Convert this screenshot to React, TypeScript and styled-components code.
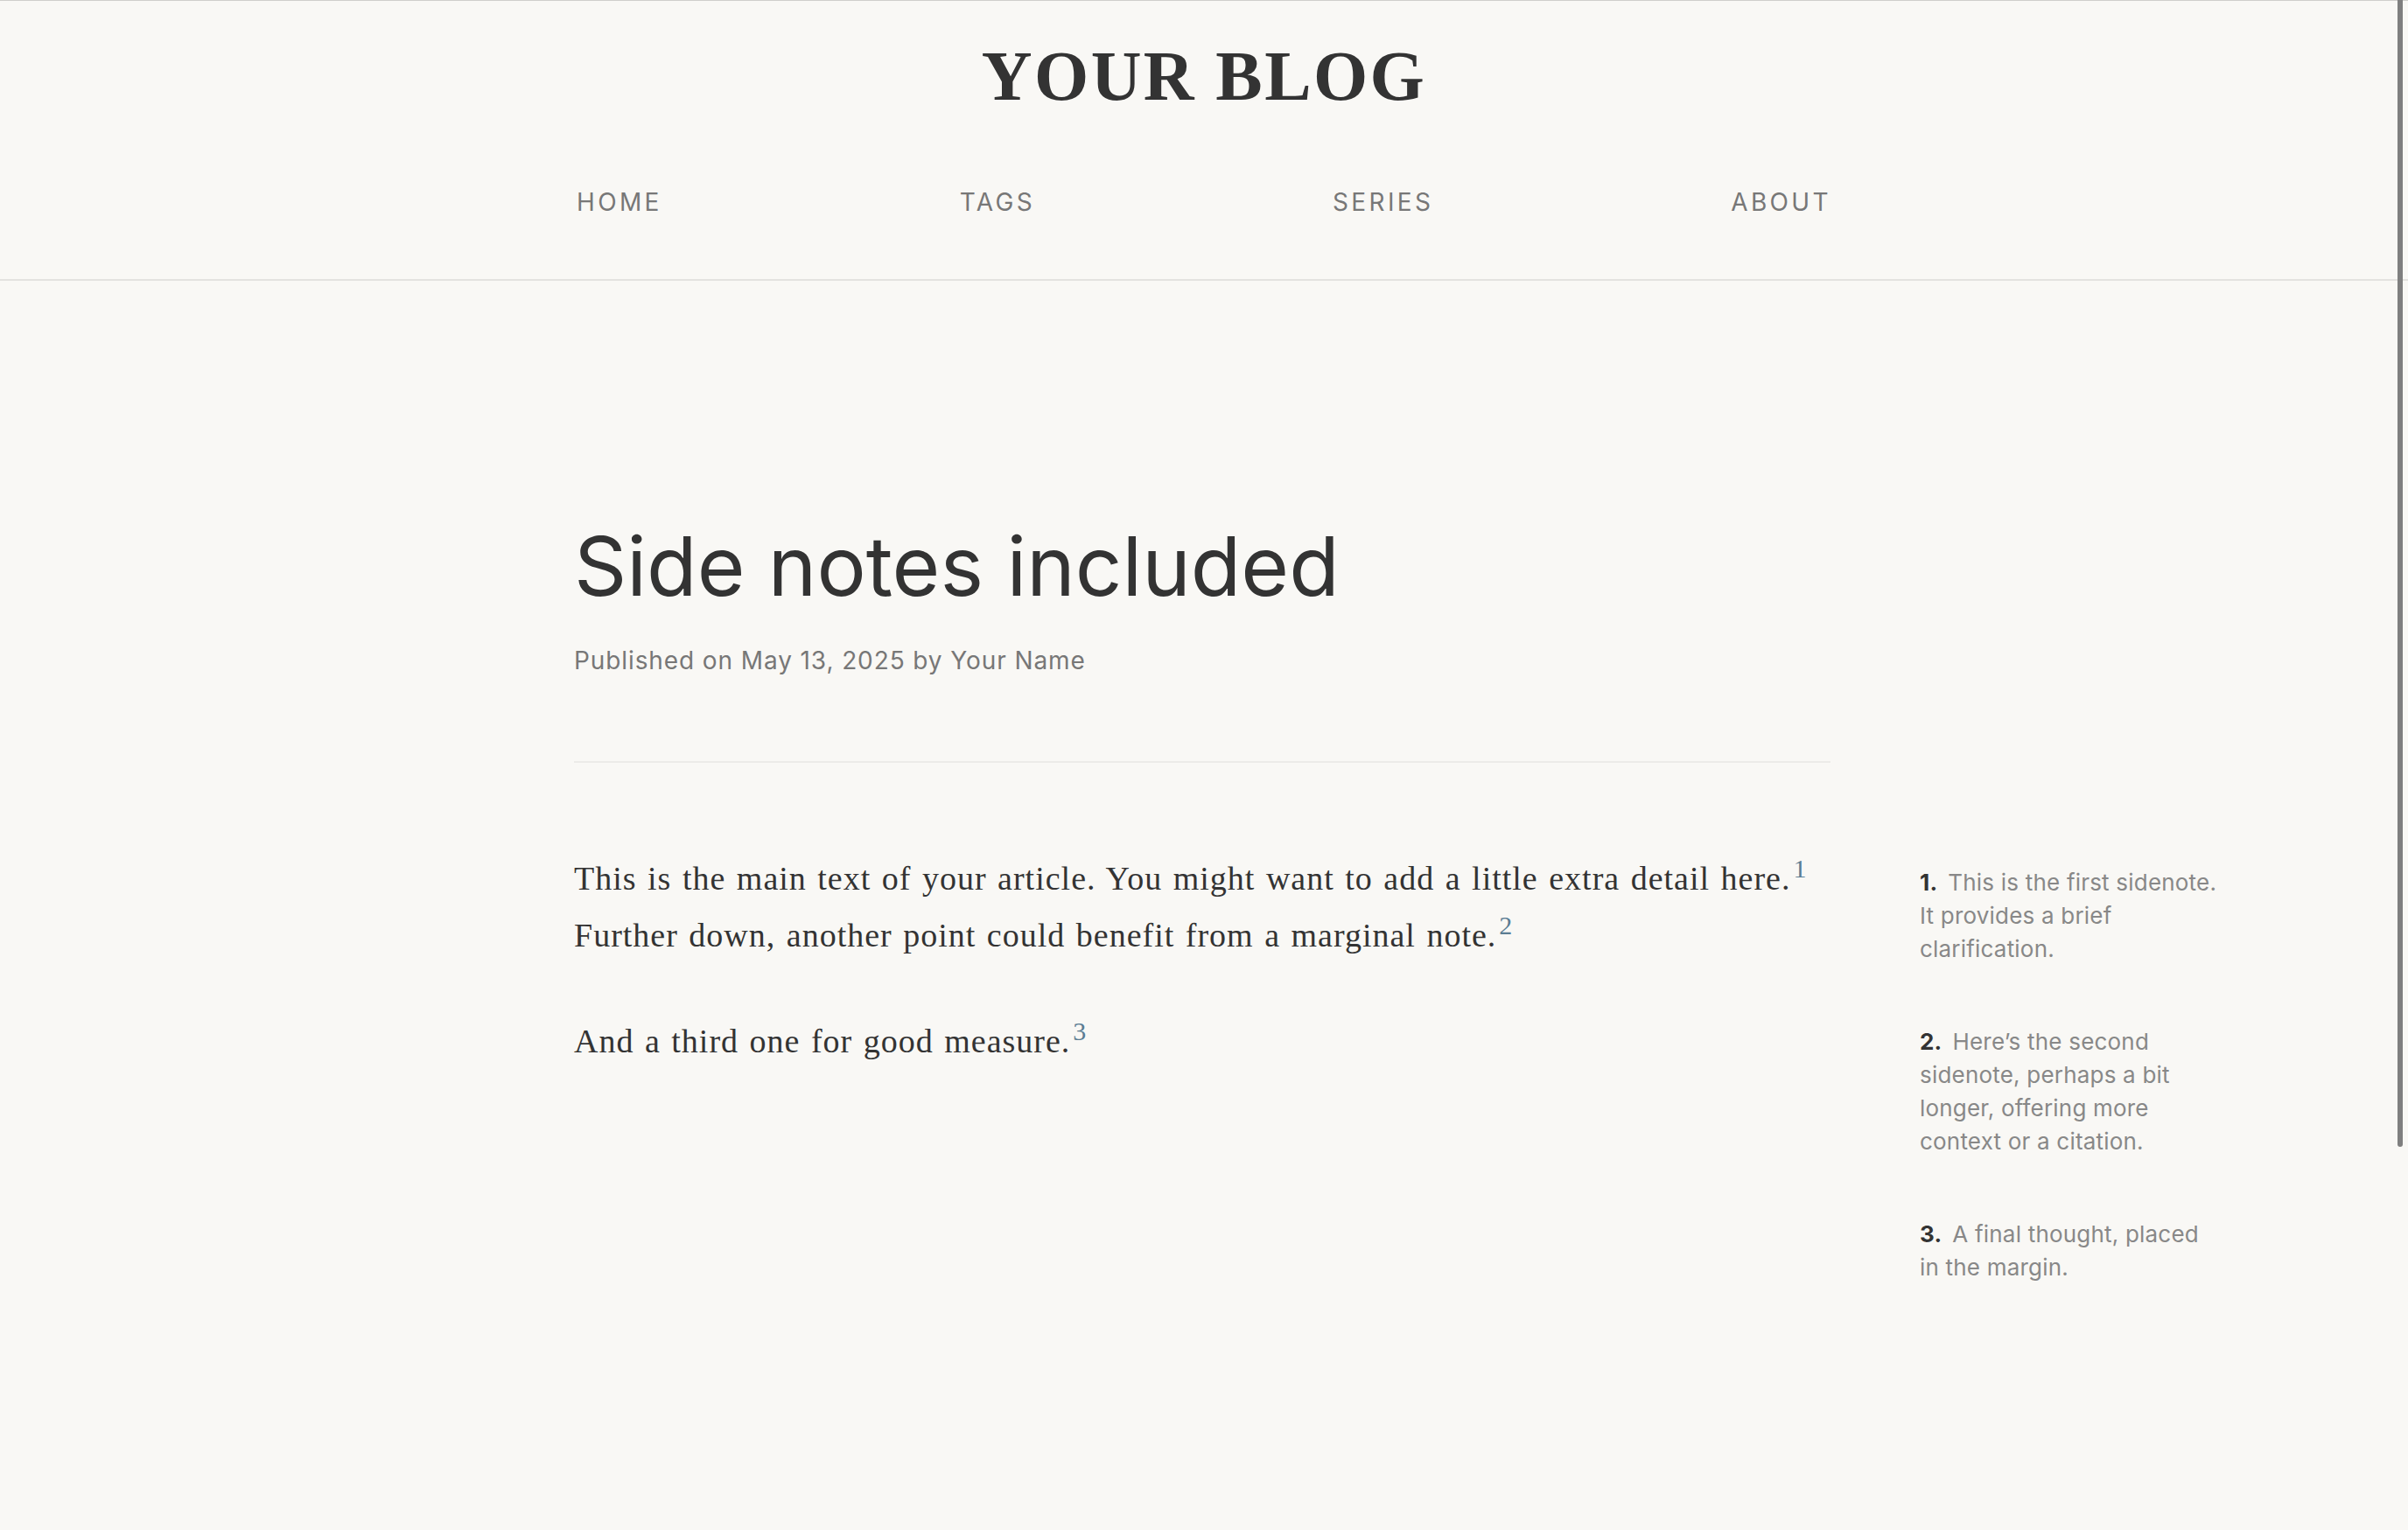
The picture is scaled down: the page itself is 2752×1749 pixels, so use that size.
import React from "react";
import styled, { createGlobalStyle } from "styled-components";

const sans = `Inter, "Noto Sans", "Liberation Sans", sans-serif`;
const serif = `"Liberation Serif", "DejaVu Serif", serif`;

const notes = [
  { id: 1, text: "This is the first sidenote. It provides a brief clarification." },
  { id: 2, text: "Here\u2019s the second sidenote, perhaps a bit longer, offering more context or a citation." },
  { id: 3, text: "A final thought, placed in the margin." }
];

const App: React.FC = () => {
  return (
    <Page>
      <GlobalStyle />
      <Header>
        <SiteTitle>YOUR BLOG</SiteTitle>
        <Nav>
          <NavLink href="#">HOME</NavLink>
          <NavLink href="#">TAGS</NavLink>
          <NavLink href="#">SERIES</NavLink>
          <NavLink href="#">ABOUT</NavLink>
        </Nav>
      </Header>
      <Main>
        <ArticleHead>
          <Title>Side notes included</Title>
          <Meta>Published on May 13, 2025 by Your Name</Meta>
          <Rule />
        </ArticleHead>
        <Body>
          <Para>
            This is the main text of your article. You might want to add a little extra detail here.
            <Ref>1</Ref> Further down, another point could benefit from a marginal note.<Ref>2</Ref>
          </Para>
          <Para>
            And a third one for good measure.<Ref>3</Ref>
          </Para>
        </Body>
        <Margin>
          {notes.map(n => (
            <Sidenote key={n.id}>
              <NoteNum>{n.id}.</NoteNum>
              {n.text}
            </Sidenote>
          ))}
        </Margin>
      </Main>
      <ScrollThumb />
    </Page>
  );
};

const GlobalStyle = createGlobalStyle`
  html, body {
    margin: 0;
    padding: 0;
    background: #f9f8f5;
  }
  * {
    box-sizing: border-box;
  }
`;

const Page = styled.div`
  min-height: 100vh;
  background: #f9f8f5;
  color: #333;
  border-top: 1px solid #cfcecb;
`;

const Header = styled.header`
  padding: 38px 0 0;
  height: 320px;
  border-bottom: 2px solid #e3e2df;
`;

const SiteTitle = styled.h1`
  margin: 0;
  text-align: center;
  font-family: ${serif};
  font-weight: 700;
  font-size: 80px;
  line-height: 1.2;
  letter-spacing: 0.03em;
  color: #333;
`;

const Nav = styled.nav`
  max-width: 1434px;
  margin: 79px auto 0;
  display: flex;
  justify-content: space-between;
`;

const NavLink = styled.a`
  font-family: ${sans};
  font-size: 28px;
  letter-spacing: 0.12em;
  color: #777;
  text-decoration: none;
`;

const Main = styled.main`
  display: grid;
  grid-template-columns: 1fr 1440px 1fr;
  grid-template-areas:
    ". head ."
    ". body margin";
  padding: 270px 0 120px;
`;

const ArticleHead = styled.div`
  grid-area: head;
`;

const Title = styled.h2`
  margin: 0;
  font-family: ${sans};
  font-weight: 400;
  font-size: 94px;
  line-height: 1.2;
  color: #333;
`;

const Meta = styled.p`
  margin: 30px 0 0;
  font-family: ${sans};
  font-size: 28px;
  line-height: 1.5;
  letter-spacing: 0.9px;
  color: #777;
`;

const Rule = styled.hr`
  margin: 94px 4px 0 0;
  border: none;
  border-top: 2px solid #ecebe8;
`;

const Body = styled.div`
  grid-area: body;
  padding-top: 100px;
`;

const Para = styled.p`
  margin: 0 0 56px;
  font-family: ${serif};
  font-size: 38px;
  line-height: 65px;
  letter-spacing: 1px;
  word-spacing: 2px;
  color: #333;
`;

const Ref = styled.sup`
  font-size: 30px;
  line-height: 0;
  vertical-align: 14px;
  letter-spacing: 0;
  color: #5b7d93;
  margin-left: 3px;
`;

const Margin = styled.aside`
  grid-area: margin;
  padding: 118px 0 0 98px;
  display: flex;
  flex-direction: column;
  gap: 68px;
`;

const Sidenote = styled.p`
  margin: 0;
  width: 340px;
  font-family: ${sans};
  font-size: 26px;
  line-height: 38px;
  letter-spacing: 0.2px;
  color: #888;
`;

const NoteNum = styled.span`
  font-weight: 700;
  color: #333;
  margin-right: 12px;
`;

const ScrollThumb = styled.div`
  position: fixed;
  top: 0;
  right: 6px;
  width: 6px;
  height: 1311px;
  background: #7f7f7f;
  border-radius: 0 0 3px 3px;
`;

export default App;
